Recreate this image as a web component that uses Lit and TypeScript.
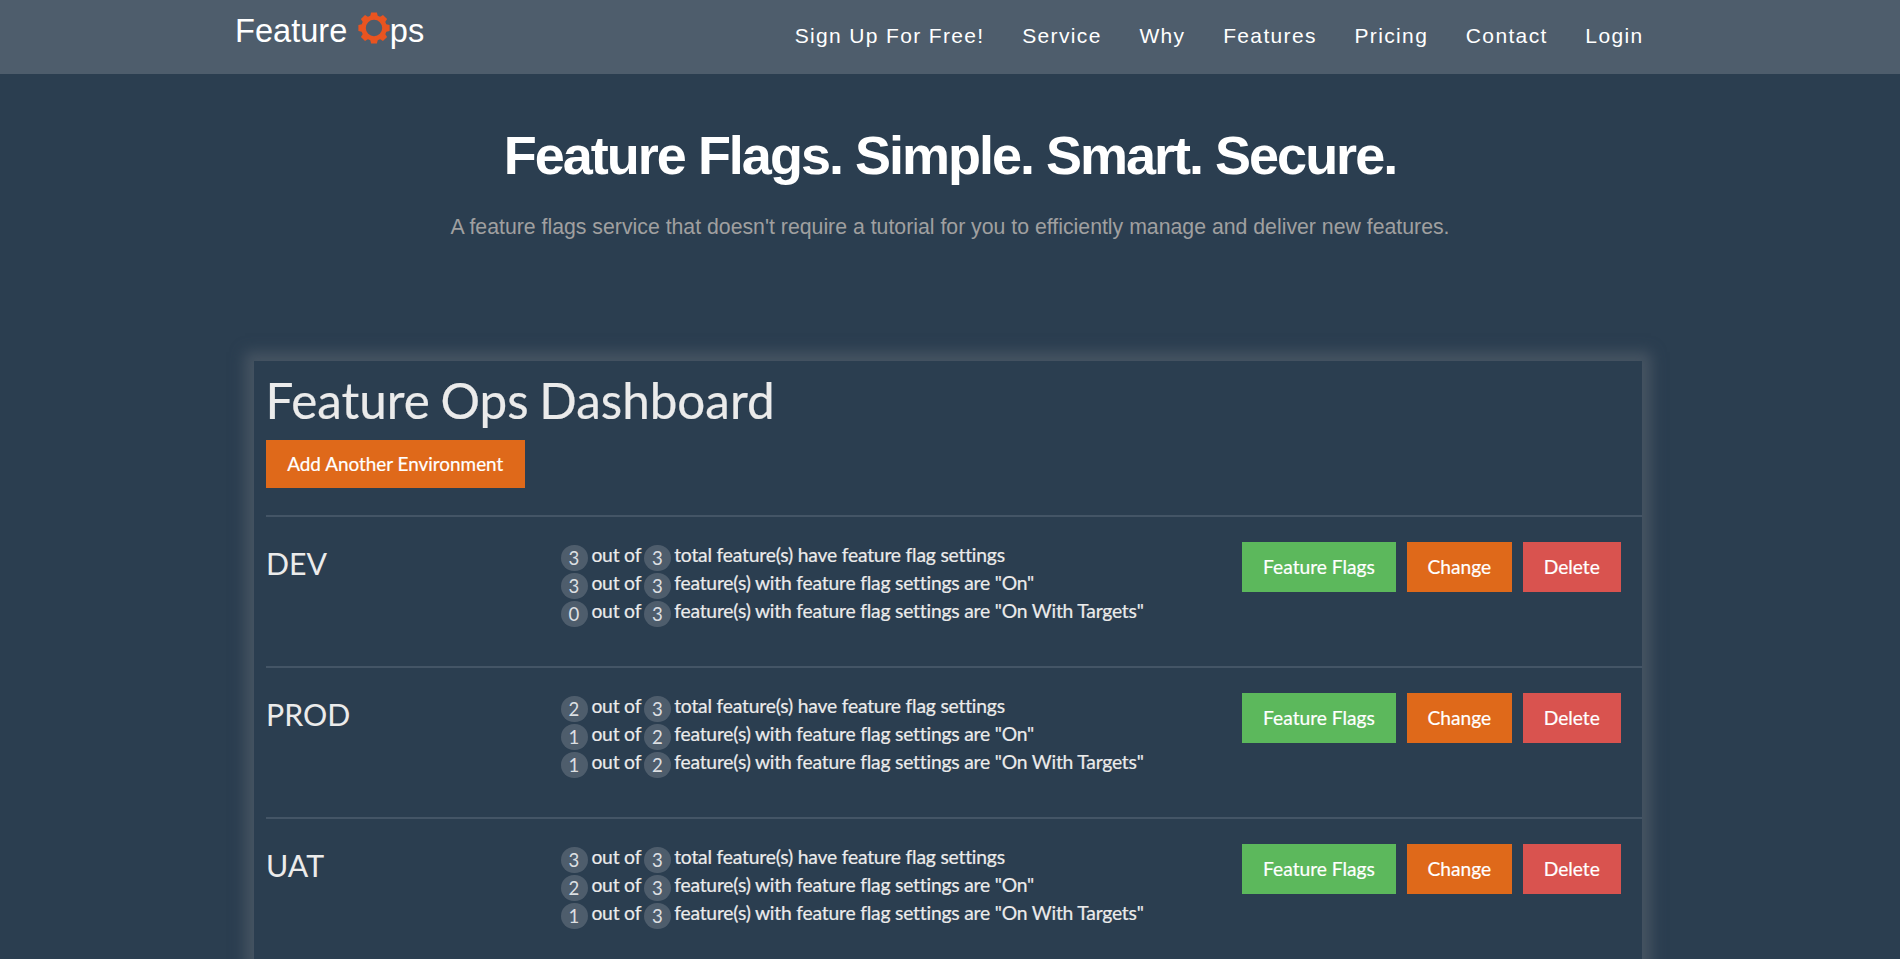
import { LitElement, html, svg, css } from "lit";
import { customElement, property } from "lit/decorators.js";

interface Stat { count: number; total: number; label: string; }
interface Environment { name: string; stats: Stat[]; }

const LABELS = [
  "total feature(s) have feature flag settings",
  'feature(s) with feature flag settings are "On"',
  'feature(s) with feature flag settings are "On With Targets"',
];

const env = (name: string, pairs: [number, number][]): Environment => ({
  name,
  stats: pairs.map(([count, total], i) => ({ count, total, label: LABELS[i] })),
});

const ENVIRONMENTS: Environment[] = [
  env("DEV", [[3, 3], [3, 3], [0, 3]]),
  env("PROD", [[2, 3], [1, 2], [1, 2]]),
  env("UAT", [[3, 3], [2, 3], [1, 3]]),
];

const LINKS = ["Sign Up For Free!", "Service", "Why", "Features", "Pricing", "Contact", "Login"];

const gearTeeth = (angle: number) => svg`
  <path transform=${`rotate(${angle})`} d="M-4 -11 L-2.9 -15.6 H2.9 L4 -11 L2.5 -9.5 H-2.5 Z M-4 11 L-2.9 15.6 H2.9 L4 11 L2.5 9.5 H-2.5 Z"></path>`;

@customElement("site-header")
class SiteHeader extends LitElement {
  static styles = css`
    :host {
      display: flex;
      justify-content: space-between;
      box-sizing: border-box;
      height: 74px;
      padding: 0 256.5px 0 235px;
      background: #4e5d6c;
      color: #fff;
      font-family: "Liberation Sans", Arial, sans-serif;
    }
    .brand { display: flex; align-items: flex-start; font-size: 32.6px; line-height: 61px; }
    .gear { display: block; width: 32px; height: 32px; margin: 12px 0 0 10.5px; }
    .tail { line-height: 62px; font-size: 32.6px; }
    .nav { display: flex; gap: 37.7px; font-size: 21px; line-height: 71px; letter-spacing: 1.35px; white-space: nowrap; }
    .link { color: inherit; text-decoration: none; }
  `;
  render() {
    return html`
      <div class="brand">
        <span>Feature</span>
        <svg class="gear" viewBox="-16 -16 32 32">
          <g fill="#e95420">
            ${[0, 45, 90, 135].map((a) => gearTeeth(a))}
          </g>
          <circle r="10.5" fill="none" stroke="#e95420" stroke-width="4.6"></circle>
        </svg>
        <span class="tail">ps</span>
      </div>
      <nav class="nav">${LINKS.map((l) => html`<a class="link">${l}</a>`)}</nav>
    `;
  }
}

@customElement("environment-row")
class EnvironmentRow extends LitElement {
  @property({ attribute: false }) environment!: Environment;
  static styles = css`
    :host {
      display: grid;
      grid-template-columns: 294.5px 1fr auto;
      align-items: start;
      box-sizing: border-box;
      height: 151px;
      padding: 24px 21px 0 0;
      border-top: 2px solid #445566;
    }
    .name { margin: 4px 0 0; font-size: 30.3px; line-height: 36px; font-weight: 400; }
    .stat {
      display: flex;
      align-items: flex-start;
      height: 28px;
      line-height: 28px;
      font-size: 19.3px;
      letter-spacing: -0.2px;
      font-variant-ligatures: none;
      -webkit-text-stroke: 0.2px currentColor;
      white-space: nowrap;
    }
    .badge {
      box-sizing: border-box;
      width: 27px;
      height: 25.5px;
      margin: 4px 0 -2px;
      border-radius: 13px;
      background: #4e5d6c;
      color: #dcdfe2;
      font-size: 18.6px;
      line-height: 26px;
      letter-spacing: 0;
      text-align: center;
      -webkit-text-stroke: 0;
    }
    .joiner { width: 49.5px; margin: 0 2.9px 0 3.9px; }
    .label { margin-left: 3.4px; }
    .actions { display: flex; gap: 10.5px; padding-top: 1px; }
    .button {
      height: 49.5px;
      padding: 0;
      border: 0;
      color: #fff;
      font: 400 19.2px/49px Lato, sans-serif;
      -webkit-text-stroke: 0.2px currentColor;
      text-align: center;
    }
    .flags { width: 154px; background: #5cb85c; }
    .change { width: 105.5px; background: #df691a; }
    .delete { width: 98.5px; background: #d9534f; }
  `;
  render() {
    return html`
      <h2 class="name">${this.environment.name}</h2>
      <div>
        ${this.environment.stats.map((s) => html`
          <div class="stat">
            <span class="badge">${s.count}</span><span class="joiner">out of</span><span class="badge">${s.total}</span><span class="label">${s.label}</span>
          </div>`)}
      </div>
      <div class="actions">
        <button class="button flags">Feature Flags</button>
        <button class="button change">Change</button>
        <button class="button delete">Delete</button>
      </div>
    `;
  }
}

@customElement("app-root")
class AppRoot extends LitElement {
  static styles = css`
    :host {
      display: block;
      height: 959px;
      overflow: hidden;
      background: #2b3e50;
      font-family: "Liberation Sans", Arial, sans-serif;
    }
    .hero { box-sizing: border-box; height: 287px; padding-top: 51px; text-align: center; }
    .headline { margin: 0; color: #fff; font-size: 54px; line-height: 60px; letter-spacing: -2px; }
    .tagline { margin: 27px 0 0; color: #a0a0a0; font-size: 21.27px; line-height: 31px; }
    .panel {
      box-sizing: border-box;
      width: 1388px;
      height: 760px;
      margin-left: 254px;
      padding: 9px 0 0 12px;
      background: #2b3e50;
      box-shadow: 0 0 13px 9px #465462;
      color: #ebebeb;
      font-family: Lato, sans-serif;
    }
    .title {
      margin: 0 0 10px -0.5px;
      font-size: 49.4px;
      line-height: 60px;
      font-weight: 400;
      word-spacing: -2px;
      -webkit-text-stroke: 0.2px currentColor;
    }
    .add {
      display: block;
      width: 258.5px;
      height: 48px;
      margin-bottom: 27px;
      padding: 0;
      border: 0;
      background: #df691a;
      color: #fff;
      font: 400 18.9px/48px Lato, sans-serif;
      -webkit-text-stroke: 0.2px currentColor;
    }
  `;
  render() {
    return html`
      <site-header></site-header>
      <section class="hero">
        <h1 class="headline">Feature Flags. Simple. Smart. Secure.</h1>
        <p class="tagline">A feature flags service that doesn't require a tutorial for you to efficiently manage and deliver new features.</p>
      </section>
      <section class="panel">
        <h2 class="title">Feature Ops Dashboard</h2>
        <button class="add">Add Another Environment</button>
        ${ENVIRONMENTS.map((e) => html`<environment-row .environment=${e}></environment-row>`)}
      </section>
    `;
  }
}
